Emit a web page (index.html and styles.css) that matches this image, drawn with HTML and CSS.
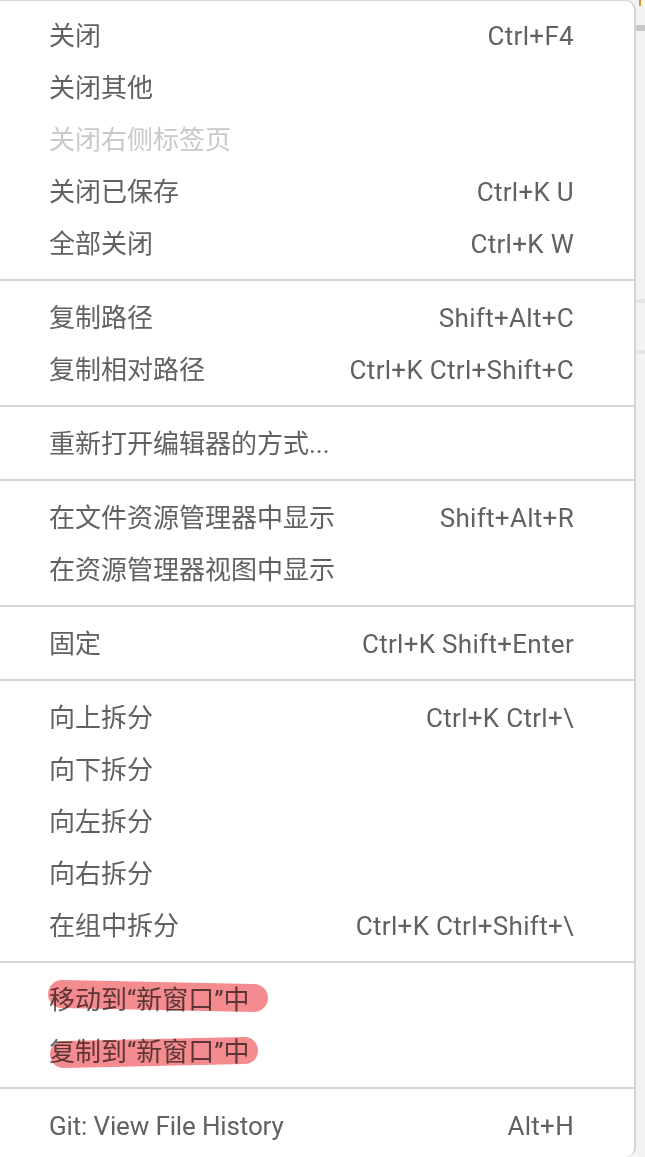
FILE: index.html
```html
<!DOCTYPE html>
<html lang="zh-CN">
<head>
<meta charset="utf-8">
<title>Menu</title>
<link rel="stylesheet" href="styles.css">
</head>
<body>
<div class="page">
  <div class="menu">
    <div class="item"><span class="label">关闭</span><span class="key">Ctrl+F4</span></div>
    <div class="item"><span class="label">关闭其他</span></div>
    <div class="item disabled"><span class="label">关闭右侧标签页</span></div>
    <div class="item"><span class="label">关闭已保存</span><span class="key">Ctrl+K U</span></div>
    <div class="item"><span class="label">全部关闭</span><span class="key">Ctrl+K W</span></div>
    <div class="sep"></div>
    <div class="item"><span class="label">复制路径</span><span class="key">Shift+Alt+C</span></div>
    <div class="item"><span class="label">复制相对路径</span><span class="key">Ctrl+K Ctrl+Shift+C</span></div>
    <div class="sep"></div>
    <div class="item"><span class="label">重新打开编辑器的方式...</span></div>
    <div class="sep"></div>
    <div class="item"><span class="label">在文件资源管理器中显示</span><span class="key">Shift+Alt+R</span></div>
    <div class="item"><span class="label">在资源管理器视图中显示</span></div>
    <div class="sep"></div>
    <div class="item"><span class="label">固定</span><span class="key">Ctrl+K Shift+Enter</span></div>
    <div class="sep"></div>
    <div class="item"><span class="label">向上拆分</span><span class="key">Ctrl+K Ctrl+\</span></div>
    <div class="item"><span class="label">向下拆分</span></div>
    <div class="item"><span class="label">向左拆分</span></div>
    <div class="item"><span class="label">向右拆分</span></div>
    <div class="item"><span class="label">在组中拆分</span><span class="key">Ctrl+K Ctrl+Shift+\</span></div>
    <div class="sep"></div>
    <div class="item"><span class="label mark mark-a">移动到“新窗口”中</span></div>
    <div class="item"><span class="label mark mark-b">复制到“新窗口”中</span></div>
    <div class="sep"></div>
    <div class="item"><span class="label latin">Git: View File History</span><span class="key">Alt+H</span></div>
  </div>
  <div class="backdrop">
    <div class="tick"></div>
    <div class="bar bar-dark"></div>
    <div class="bar bar-light bar-1"></div>
    <div class="bar bar-light bar-2"></div>
  </div>
</div>
</body>
</html>
```
FILE: styles.css
```css
html, body {
  margin: 0;
  padding: 0;
}
body {
  background: #f3f3f3;
  font-family: Roboto, "Noto Sans CJK SC", sans-serif;
  font-size: 26px;
  color: #616161;
}
.page {
  display: flex;
  height: 1157px;
  overflow: hidden;
}
.menu {
  width: 634px;
  flex: none;
  background: #ffffff;
  border-top: 1px solid #d6d6d6;
  border-right: 2px solid #d4d4d4;
  border-radius: 0 10px 10px 0;
  padding: 8px 0 6px 0;
  box-sizing: content-box;
}
.item {
  display: flex;
  justify-content: space-between;
  align-items: center;
  box-sizing: border-box;
  height: 52px;
  line-height: 49px;
  padding: 3px 60px 0 49px;
  white-space: nowrap;
}
.item.disabled {
  color: #c9c9c9;
}
.label {
  position: relative;
}
.latin {
  letter-spacing: -0.15px;
}
.key {
  color: #616161;
  letter-spacing: 0.3px;
}
.sep {
  height: 2px;
  background: #d4d4d4;
  margin: 10px 0;
}
.mark::after {
  content: "";
  position: absolute;
  background: #f48b8e;
  mix-blend-mode: multiply;
  border-radius: 14px;
}
.mark-a::after {
  left: -1px;
  width: 220px;
  top: 6px;
  height: 28px;
  transform: rotate(1.2deg);
}
.mark-b::after {
  left: 1px;
  width: 208px;
  top: 11px;
  height: 27px;
  transform: rotate(-1.2deg);
}
.backdrop {
  flex: 1;
  display: flex;
  flex-direction: column;
}
.tick {
  width: 2px;
  height: 6px;
  margin-left: 3px;
  background: #c89b2a;
}
.bar {
  flex: none;
}
.bar-dark {
  height: 6px;
  margin-top: 19px;
  background: #c8c8c8;
}
.bar-light {
  height: 4px;
  background: #e5e5e5;
}
.bar-1 {
  margin-top: 268px;
}
.bar-2 {
  margin-top: 47px;
}
```
